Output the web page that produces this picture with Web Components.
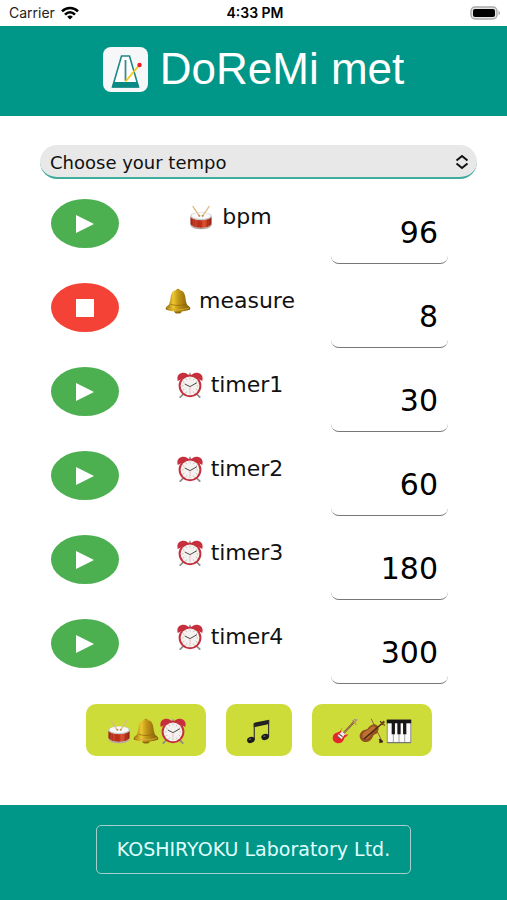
<!DOCTYPE html>
<html lang="en">
<head>
<meta charset="utf-8">
<meta name="viewport" content="width=device-width, initial-scale=1">
<title>DoReMi met</title>
<style>
  :root {
    --teal: #009688;
    --green: #4caf50;
    --red: #f44336;
    --lime: #cddc39;
  }

  body {
    margin: 0;
    background: #fff;
    color: #111;
    font-family: Verdana, "DejaVu Sans", sans-serif;
  }
</style>
</head>
<body>
<met-app></met-app>

<script>
/* Pictograms, all on a 32x32 grid */
const glyphs = {
  drum: `
    <defs>
      <linearGradient id="shell"><stop offset="0" stop-color="#8e1f10"/><stop offset=".2" stop-color="#d8452a"/><stop offset=".4" stop-color="#b52b16"/><stop offset=".65" stop-color="#e0512f"/><stop offset="1" stop-color="#8e1f10"/></linearGradient>
    </defs>
    <path d="M3 16v9c1 3 6 5 13 5s12-2 13-5v-9z" fill="url(#shell)"/>
    <path d="M3 24c1 3 6 5 13 5s12-2 13-5v2c-1 3-6 5-13 5S4 29 3 26z" fill="#b9aaa6"/>
    <path d="M8 19v9M16 20v10M24 19v9" stroke="#a02a18" stroke-width=".8"/>
    <ellipse cx="16" cy="15" rx="13.300" ry="5" fill="#c6c9ca"/>
    <ellipse cx="16" cy="14.400" rx="11.800" ry="4" fill="#fafafa"/>
    <path d="M6 3l8 12M26 3l-8 12" stroke="#dcbd85" stroke-width="1.600" stroke-linecap="round"/>
    <circle cx="14" cy="14.500" r="1.200" fill="#b98f55"/><circle cx="18" cy="14.500" r="1.200" fill="#b98f55"/>`,
  bell: `
    <defs>
      <linearGradient id="gold"><stop offset="0" stop-color="#8a6208"/><stop offset=".3" stop-color="#ecc832"/><stop offset=".5" stop-color="#c59a18"/><stop offset="1" stop-color="#7d5706"/></linearGradient>
    </defs>
    <circle cx="16" cy="3.200" r="2.400" fill="#b58c17"/>
    <ellipse cx="16" cy="28.500" rx="4.500" ry="3" fill="#8f690e"/>
    <path d="M16 2.500c-6 0-8 3-9 8.500-1 6-1 9-5 12-2 2-1 4 1 4 7 2.500 19 2.500 26 0 2 0 3-2 1-4-4-3-4-6-5-12-1-5.500-3-8.500-9-8.500z" fill="url(#gold)"/>
    <path d="M2.500 24.500c7 3 20 3 27 0" fill="none" stroke="#d3ab30" stroke-width="1.200"/>
    <path d="M7 20c6 2 12 2 18 0" fill="none" stroke="#8a6208" stroke-width=".8"/>`,
  clock: `
    <path d="M8 27l-4 4M24 27l4 4" stroke="#8a8a8a" stroke-width="2" stroke-linecap="round"/>
    <path d="M16 1v5" stroke="#a5a5a5" stroke-width="2"/>
    <path d="M1 11C-1 5 3 1 8 1c3 0 5 1.500 6 3zM31 11c2-6-2-10-7-10-3 0-5 1.500-6 3z" fill="#c62f3b"/>
    <circle cx="16" cy="17" r="14" fill="#c5303d"/>
    <circle cx="16" cy="17" r="11.600" fill="#f4f1ef"/>
    <path d="M16 7v2M16 25v2M6 17h2M24 17h2M11 8.300l1 1.700M21 8.300l-1 1.700M7.300 12l1.700 1M24.700 12l-1.700 1M7.300 22l1.700-1M24.700 22l-1.700-1M11 25.700l1-1.700M21 25.700l-1-1.700" stroke="#b0b0b0" stroke-width=".9"/>
    <path d="M10 15l6 3 8-4.500" fill="none" stroke="#444" stroke-width="1.200" stroke-linecap="round" stroke-linejoin="round"/>
    <path d="M16 17.500v7" stroke="#e08a8a" stroke-width=".6"/>`,
  notes: `
    <path d="M9.500 6l19-4v5.500l-19 4z" fill="#222"/>
    <path d="M10.200 7v20M27.800 3v20" stroke="#333" stroke-width="1.400"/>
    <ellipse cx="6" cy="27" rx="4.800" ry="3.700" transform="rotate(-20 6 27)" fill="#1c1c1c"/>
    <ellipse cx="23.600" cy="23.300" rx="4.800" ry="3.700" transform="rotate(-20 23.600 23.300)" fill="#1c1c1c"/>
    <ellipse cx="5" cy="26" rx="1.500" ry=".8" fill="#777"/><ellipse cx="22.500" cy="22.300" rx="1.500" ry=".8" fill="#777"/>`,
  guitar: `
    <path d="M14 19L28 4" stroke="#7a4a33" stroke-width="2.400"/>
    <path d="M14.500 18.500L28 4" stroke="#d7b59a" stroke-width=".8"/>
    <path d="M26 5l4-4 2 .5-3 5z" fill="#c99a72"/>
    <path d="M25 3l2 1M27 1.500l2 1M28 7l2 1" stroke="#777" stroke-width="1"/>
    <path d="M13 12c-2 1-2 4-4 5-3 1-7 2-8 6-1 5 3 8 7 8 5 0 6-3 7-6 1-2 4-2 5-5l-4 1-3-3-2-3z" fill="#e5262b"/>
    <path d="M12 16c-1 3-4 3-5 6l5 4c1-3 3-4 4-6z" fill="#f4ecea"/>
    <path d="M9 20l4 3M7 23l3 3" stroke="#555" stroke-width="1.300"/>`,
  violin: `
    <path d="M15 1l13 27" stroke="#9d5b25" stroke-width="1.200"/>
    <path d="M13 2l13 27" stroke="#d9c7a0" stroke-width=".6"/>
    <path d="M25 26l4 4M25 30l4-2" stroke="#3a2114" stroke-width="2.400"/>
    <path d="M17 8c4-1 8 3 7 6-1 2 0 3-2 5-2 1-4 1-5 4-2 5-7 8-12 6-5-3-6-9-1-13 3-2 5-1 7-3 1-2 3-4 6-5z" fill="#96501f"/>
    <path d="M16 10c3 0 5 1 5 4-1 2-5 3-6 5-1 4-5 8-8 7-4-2-3-7 0-9 3-2 6-3 9-7z" fill="#bd7233"/>
    <path d="M6 26L28 7" stroke="#4b2a18" stroke-width="1.800"/>
    <path d="M27 7l3-4 2 2-3 4z" fill="#7a3f1b"/>
    <path d="M26 4l2 2M30 8l2 1" stroke="#4e2a15" stroke-width="1.400"/>`,
  piano: `
    <rect x="1" y="2" width="30" height="29" rx="1" fill="#777"/>
    <rect x="2" y="5" width="28" height="24.500" fill="#fafafa"/>
    <rect x="1" y="2" width="30" height="4.500" fill="#161616"/>
    <path d="M9 6v24M16 6v24M23 6v24" stroke="#888" stroke-width=".9"/>
    <path d="M7 5h4v15H7zM14 5h4v15h-4zM21 5h4v15h-4z" fill="#161616"/>`
};

class MetGlyph extends HTMLElement {
  connectedCallback() {
    this.attachShadow({ mode: "open" }).innerHTML = `
      <style>
        :host { display: inline-flex; flex: none; width: 26px; height: 26px; }
        svg { width: 100%; height: 100%; }
      </style>
      <svg viewBox="0 0 32 32" aria-hidden="true">${glyphs[this.getAttribute("name")]}</svg>
    `;
  }
}

class StatusBar extends HTMLElement {
  connectedCallback() {
    this.attachShadow({ mode: "open" }).innerHTML = `
      <style>
        :host {
          display: grid;
          grid-template-columns: 1fr auto 1fr;
          align-items: center;
          height: 26px;
          padding: 0 6px 0 9px;
          font: 14px/26px Inter, Roboto, sans-serif;
          color: #222;
        }
        .carrier { display: flex; align-items: center; gap: 6px; }
        .time { font-weight: 600; color: #000; }
        .battery { justify-self: end; }
        svg { display: block; }
      </style>
      <span class="carrier">Carrier
        <svg width="18" height="14" viewBox="0 0 18 14" fill="none" stroke="#000" stroke-width="2.600">
          <path d="M1 5.300C5.500.800 12.500.800 17 5.300"/>
          <path d="M4 8.600c3-3 7-3 10 0"/>
          <path d="M9 13.500L6.200 10.700c1.600-1.500 4-1.500 5.600 0z" fill="#000" stroke="none"/>
        </svg>
      </span>
      <span class="time">4:33 PM</span>
      <svg class="battery" width="31" height="14" viewBox="0 0 31 14">
        <rect x="1" y="1" width="26" height="12" rx="4" fill="#e4e4e4" stroke="#aaa" stroke-width="1.400"/>
        <rect x="3" y="3" width="22" height="8" rx="2" fill="#000"/>
        <path d="M28.500 4.800c2 .7 2 3.700 0 4.400z" fill="#aaa"/>
      </svg>
    `;
  }
}

class MetHeader extends HTMLElement {
  connectedCallback() {
    this.attachShadow({ mode: "open" }).innerHTML = `
      <style>
        :host {
          display: flex;
          justify-content: center;
          align-items: center;
          gap: 12px;
          box-sizing: border-box;
          height: 90px;
          padding-bottom: 4px;
          background: var(--teal);
          color: #fff;
        }
        h1 { margin: 0; font: 44px/48px Arial, "Liberation Sans", sans-serif; }
      </style>
      <svg width="45" height="45" viewBox="0 0 45 45" aria-hidden="true">
        <rect width="45" height="45" rx="8" fill="#f6f7f8"/>
        <path d="M18.500 9h8L35.500 40h-26z" fill="#fff" stroke="#1a8a86" stroke-width="1.600"/>
        <path d="M10.500 35h24l1.500 5.500H9z" fill="#0b8a83"/>
        <path d="M22.500 13v21" stroke="#3b8c8c" stroke-width="1.800"/>
        <path d="M22.500 34.500L36 18.500" stroke="#f6c71c" stroke-width="1.800"/>
        <circle cx="36.500" cy="18" r="2.200" fill="#ee1c25"/>
      </svg>
      <h1><slot></slot></h1>
    `;
  }
}

class TempoSelect extends HTMLElement {
  connectedCallback() {
    this.attachShadow({ mode: "open" }).innerHTML = `
      <style>
        :host { display: grid; align-items: center; }
        select, svg { grid-area: 1 / 1; }
        select {
          appearance: none;
          box-sizing: border-box;
          width: 100%;
          height: 34px;
          margin: 0;
          padding: 3px 32px 0 10px;
          border: 0;
          border-bottom: 2px solid #3fac9f;
          border-radius: 17px;
          background: #e8e8e8;
          color: #111;
          font: 18px/29px Verdana, "DejaVu Sans", sans-serif;
        }
        svg { justify-self: end; margin-right: 8px; pointer-events: none; }
      </style>
      <select aria-label="Tempo">
        <option>Choose your tempo</option>
      </select>
      <svg width="14" height="16" viewBox="0 0 14 16" fill="none" stroke="#111" stroke-width="2">
        <path d="M1.500 6.500L7 2l5.500 4.500M1.500 9.500L7 14l5.500-4.500"/>
      </svg>
    `;
  }
}

/**
 * One counter line: start/stop button, label and number field.
 *
 * @attr {string} icon - glyph name
 * @attr {string} label - text of the label
 * @attr {string} value - number in the field
 * @attr {boolean} running - shows the stop button
 */
class MetRow extends HTMLElement {
  connectedCallback() {
    const running = this.hasAttribute("running");
    const label = this.getAttribute("label");
    this.attachShadow({ mode: "open" }).innerHTML = `
      <style>
        :host {
          display: grid;
          grid-template-columns: 68px 1fr 117px;
          align-items: start;
          padding: 0 29px 0 11px;
        }
        button {
          display: grid;
          place-items: center;
          height: 49px;
          padding: 0;
          border: 0;
          border-radius: 50%;
          background: var(--green);
          cursor: pointer;
        }
        button.stop { background: var(--red); }
        label {
          display: flex;
          justify-content: center;
          align-items: center;
          gap: 8px;
          padding-left: 10px;
          font-size: 22px;
          line-height: 36px;
        }
        input {
          appearance: textfield;
          box-sizing: border-box;
          width: 100%;
          height: 65px;
          margin: 0;
          padding: 2px 10px 0;
          border: 0;
          border-bottom: 1px solid #777;
          border-radius: 8px;
          background: #fff;
          color: #000;
          font: 30px/36px Verdana, "DejaVu Sans", sans-serif;
          text-align: right;
        }
        input::-webkit-inner-spin-button { display: none; }
      </style>
      <button type="button" class="${running ? "stop" : "play"}" aria-label="${running ? "Stop" : "Start"} ${label}">
        <svg width="18" height="18" viewBox="0 0 18 18" fill="#fff">
          <path d="${running ? "M0 0h18v18H0z" : "M0 0l18 9L0 18z"}"/>
        </svg>
      </button>
      <label for="value"><met-glyph name="${this.getAttribute("icon")}"></met-glyph>${label}</label>
      <input id="value" type="number" value="${this.getAttribute("value")}">
    `;
  }
}

class SoundButton extends HTMLElement {
  connectedCallback() {
    this.attachShadow({ mode: "open" }).innerHTML = `
      <style>
        :host { display: block; }
        button {
          display: flex;
          align-items: center;
          gap: 1px;
          height: 52px;
          padding: 2px 20px 0;
          border: 0;
          border-radius: 10px;
          background: var(--lime);
          cursor: pointer;
        }
      </style>
      <button type="button" aria-label="${this.getAttribute("label")}"><slot></slot></button>
    `;
  }
}

class MetFooter extends HTMLElement {
  connectedCallback() {
    this.attachShadow({ mode: "open" }).innerHTML = `
      <style>
        :host {
          display: flex;
          justify-content: center;
          padding: 20px 0 26px;
          background: var(--teal);
        }
        a {
          padding: 0 20px;
          border: 1px solid #a5cfcb;
          border-radius: 5px;
          color: #e0ffff;
          font-size: 19px;
          line-height: 47px;
          text-decoration: none;
        }
      </style>
      <a href="#"><slot></slot></a>
    `;
  }
}

class MetApp extends HTMLElement {
  connectedCallback() {
    this.attachShadow({ mode: "open" }).innerHTML = `
      <style>
        :host { display: flex; flex-direction: column; min-height: 100vh; }
        main { flex: 1; padding: 29px 30px 20px 40px; }
        .rows { display: grid; gap: 19px; margin: 20px 0; }
        .sounds { display: flex; justify-content: center; gap: 20px; }
      </style>
      <status-bar></status-bar>
      <met-header>DoReMi met</met-header>
      <main>
        <tempo-select></tempo-select>
        <div class="rows">
          <met-row icon="drum" label="bpm" value="96"></met-row>
          <met-row icon="bell" label="measure" value="8" running></met-row>
          <met-row icon="clock" label="timer1" value="30"></met-row>
          <met-row icon="clock" label="timer2" value="60"></met-row>
          <met-row icon="clock" label="timer3" value="180"></met-row>
          <met-row icon="clock" label="timer4" value="300"></met-row>
        </div>
        <div class="sounds">
          <sound-button label="Counter sounds">
            <met-glyph name="drum"></met-glyph><met-glyph name="bell"></met-glyph><met-glyph name="clock"></met-glyph>
          </sound-button>
          <sound-button label="Notes">
            <met-glyph name="notes"></met-glyph>
          </sound-button>
          <sound-button label="Instruments">
            <met-glyph name="guitar"></met-glyph><met-glyph name="violin"></met-glyph><met-glyph name="piano"></met-glyph>
          </sound-button>
        </div>
      </main>
      <met-footer>KOSHIRYOKU Laboratory Ltd.</met-footer>
    `;
  }
}

customElements.define("met-glyph", MetGlyph);
customElements.define("status-bar", StatusBar);
customElements.define("met-header", MetHeader);
customElements.define("tempo-select", TempoSelect);
customElements.define("met-row", MetRow);
customElements.define("sound-button", SoundButton);
customElements.define("met-footer", MetFooter);
customElements.define("met-app", MetApp);
</script>
</body>
</html>
